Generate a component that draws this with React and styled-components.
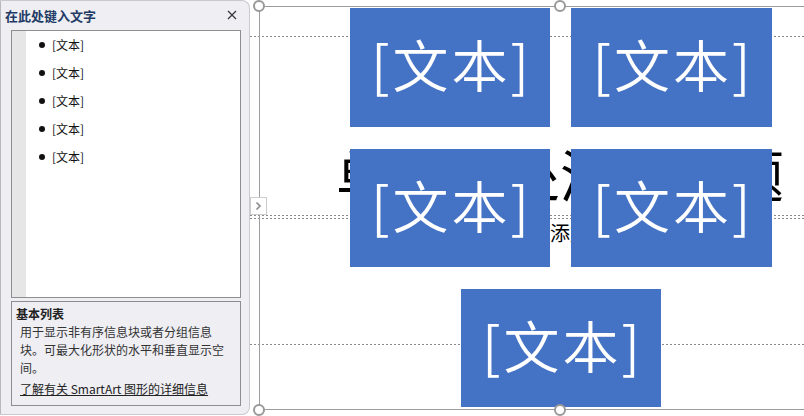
import React from 'react';
import styled, { createGlobalStyle } from 'styled-components';

const uiFont = `"Noto Sans CJK SC", "Noto Sans", sans-serif`;
const blue = '#4472c4';
const dash = 'repeating-linear-gradient(90deg, #8a8a8a 0 2px, transparent 2px 4px)';

const GlobalStyle = createGlobalStyle`
  html, body {
    margin: 0;
    padding: 0;
    background: #ffffff;
  }
  body {
    width: 804px;
    height: 416px;
    overflow: hidden;
    font-family: ${uiFont};
  }
`;

const Page = styled.div`
  display: flex;
  width: 804px;
  height: 416px;
  background: #ffffff;
`;

// ---- text pane ----

const Pane = styled.aside`
  box-sizing: border-box;
  width: 250px;
  height: 415px;
  flex: none;
  display: flex;
  flex-direction: column;
  background: #eeeef3;
  border: 1px solid #c9c9d1;
  border-left-color: #b8b8c0;
  border-radius: 0 8px 8px 0;
  padding: 0 8px 8px 10px;
`;

const PaneHeader = styled.div`
  height: 29px;
  display: flex;
  align-items: center;
  justify-content: space-between;
  margin-left: -6px;
  padding-right: 2px;
`;

const PaneTitle = styled.h1`
  margin: 0;
  font-size: 13px;
  font-weight: 700;
  color: #1f3b66;
`;

const CloseButton = styled.button`
  border: 0;
  background: transparent;
  padding: 0;
  width: 14px;
  height: 14px;
  display: flex;
  align-items: center;
  justify-content: center;
`;

const ListBox = styled.div`
  box-sizing: border-box;
  height: 269px;
  display: flex;
  background: #ffffff;
  border: 1px solid #8e8e8e;
`;

const Gutter = styled.div`
  width: 14px;
  background: #e6e6e6;
`;

const BulletList = styled.ul`
  list-style: none;
  margin: 0;
  padding: 0 0 0 13px;
`;

const BulletItem = styled.li`
  height: 28px;
  display: flex;
  align-items: center;
  gap: 7px;
  font-size: 12px;
  color: #111;

  &::before {
    content: '';
    width: 6px;
    height: 6px;
    border-radius: 50%;
    background: #111;
  }
`;

const InfoBox = styled.div`
  box-sizing: border-box;
  margin-top: 3px;
  height: 105px;
  border: 1px solid #8e8e8e;
  padding: 3px 0 0 4px;
  font-size: 12px;
  line-height: 18px;
  color: #333;
`;

const InfoTitle = styled.div`
  font-weight: 700;
  color: #222;
`;

const InfoText = styled.p`
  margin: 0;
  padding-left: 4px;
  white-space: nowrap;
`;

const InfoLine = styled.span`
  display: block;
`;

const InfoLink = styled.a`
  display: inline-block;
  margin: 3px 0 0 4px;
  color: #222;
  text-decoration: underline;
`;

// ---- slide canvas (free canvas: placeholders, frame and diagram sit on it) ----

const Slide = styled.section`
  position: relative;
  flex: 1;
  height: 416px;
  overflow: hidden;
  background: #ffffff;
`;

const Placeholder = styled.div`
  position: absolute;
  box-sizing: border-box;
  left: 0;
  width: 620px;
  top: ${p => p.$top}px;
  height: ${p => p.$height}px;
  display: flex;
  justify-content: center;
  align-items: ${p => (p.$bottom ? 'flex-end' : 'flex-start')};
  padding: ${p => (p.$bottom ? '0 0 15px 0' : '5px 0 0 0')};
  background:
    ${dash} top left / 100% 1px no-repeat,
    ${dash} bottom left / 100% 1px no-repeat;
  font-size: ${p => p.$size}px;
  line-height: 1;
  color: #000;
  white-space: nowrap;
`;

const Frame = styled.div`
  position: absolute;
  box-sizing: border-box;
  left: 9px;
  top: 6px;
  width: 602px;
  height: 404px;
  border: 1px solid #9c9c9c;
`;

const Diagram = styled.div`
  position: absolute;
  left: 100px;
  top: 8px;
  width: 422px;
  display: flex;
  flex-wrap: wrap;
  justify-content: center;
  gap: 22px 21px;
`;

const Shape = styled.div`
  width: ${p => p.$w}px;
  height: ${p => p.$h}px;
  background: ${blue};
  display: flex;
  align-items: center;
  justify-content: center;
  padding: 0 0 10px 3px;
  box-sizing: border-box;
  color: #fff;
  font-size: 56px;
  font-weight: 350;
  letter-spacing: 3px;
`;

const Handle = styled.span`
  position: absolute;
  box-sizing: border-box;
  left: ${p => (p.$mid ? 'calc(50% - 6px)' : '-7px')};
  ${p => (p.$low ? 'bottom: -7px;' : 'top: -7px;')}
  width: 12px;
  height: 12px;
  border-radius: 50%;
  border: 2px solid #999;
  background: #fff;
`;

const Expander = styled.button`
  position: absolute;
  left: 0;
  top: 197px;
  box-sizing: border-box;
  width: 17px;
  height: 18px;
  padding: 0;
  background: #fff;
  border: 1px solid #cdcdcd;
  display: flex;
  align-items: center;
  justify-content: center;
`;

const items = ['[文本]', '[文本]', '[文本]', '[文本]', '[文本]'];

const shapes = [
  { w: 200, h: 119 },
  { w: 201, h: 119 },
  { w: 200, h: 118 },
  { w: 201, h: 118 },
  { w: 200, h: 118 },
];

const infoLines = ['用于显示非有序信息块或者分组信息', '块。可最大化形状的水平和垂直显示空', '间。'];

export default function App() {
  return (
    <Page>
      <GlobalStyle />
      <Pane>
        <PaneHeader>
          <PaneTitle>在此处键入文字</PaneTitle>
          <CloseButton aria-label="关闭">
            <svg width="10" height="10" viewBox="0 0 10 10">
              <path d="M1 1L9 9M9 1L1 9" stroke="#3a3a3a" strokeWidth="1.3" />
            </svg>
          </CloseButton>
        </PaneHeader>
        <ListBox>
          <Gutter />
          <BulletList>
            {items.map((t, i) => (
              <BulletItem key={i}>{t}</BulletItem>
            ))}
          </BulletList>
        </ListBox>
        <InfoBox>
          <InfoTitle>基本列表</InfoTitle>
          <InfoText>
            {infoLines.map((l, i) => (
              <InfoLine key={i}>{l}</InfoLine>
            ))}
          </InfoText>
          <InfoLink>了解有关 SmartArt 图形的详细信息</InfoLink>
        </InfoBox>
      </Pane>

      <Slide>
        <Placeholder $top={36} $height={180} $size={56} $bottom>单击此处添加标题</Placeholder>
        <Placeholder $top={218} $height={127} $size={20}>单击此处添加副标题</Placeholder>
        <Diagram>
          {shapes.map((s, i) => (
            <Shape key={i} $w={s.w} $h={s.h}>[文本]</Shape>
          ))}
        </Diagram>
        <Frame>
          <Handle />
          <Handle $mid />
          <Handle $low />
          <Handle $mid $low />
        </Frame>
        <Expander aria-label="展开">
          <svg width="7" height="10" viewBox="0 0 7 10">
            <path d="M1.5 1.5L5 5L1.5 8.5" fill="none" stroke="#8a8a8a" strokeWidth="1.6" />
          </svg>
        </Expander>
      </Slide>
    </Page>
  );
}
